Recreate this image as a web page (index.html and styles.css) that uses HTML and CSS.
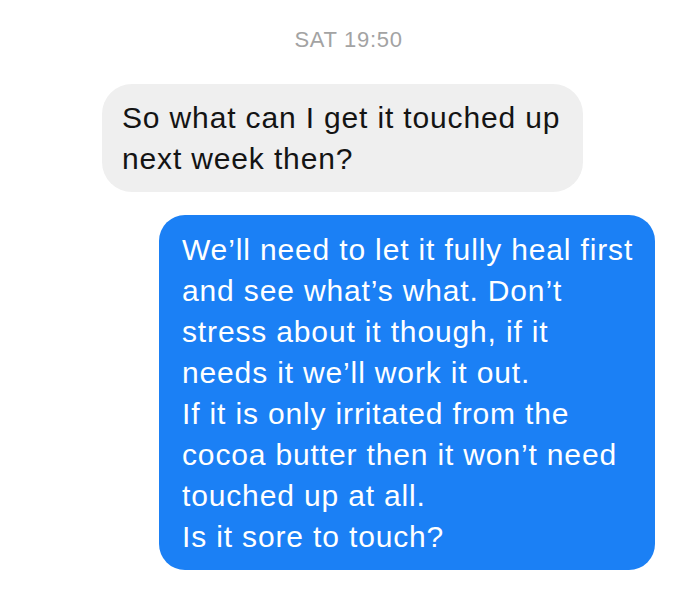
FILE: index.html
```html
<!DOCTYPE html>
<html lang="en">
  <head>
    <meta charset="UTF-8" />
    <meta name="viewport" content="width=device-width, initial-scale=1.0" />
    <title>Messages</title>
    <link rel="stylesheet" href="styles.css">
  </head>
  <body>
    <main class="thread">
      <div class="stamp">SAT 19:50</div>

      <div class="row row-in">
        <p class="bubble bubble-in">So what can I get it touched up next week then?</p>
      </div>

      <div class="row row-out">
        <p class="bubble bubble-out">
          We’ll need to let it fully heal first and see what’s what. Don’t stress about it though, if it needs it we’ll work it out.<br>
          If it is only irritated from the cocoa butter then it won’t need touched up at all.<br>
          Is it sore to touch?
        </p>
      </div>
    </main>
  </body>
</html>
```

FILE: styles.css
```css
:root {
  --bubble-in: #efefef;
  --bubble-out: #1b80f5;
  --stamp-clr: #a3a3a3;
}
body {
  margin: 0;
  background: #fff;
  font-family: "Liberation Sans", Arial, sans-serif;
  color: #141414;
}
.thread {
  padding: 27px 45px 0 102px;
  display: flex;
  flex-direction: column;
}
.stamp {
  text-align: center;
  font-size: 22px;
  line-height: 26px;
  letter-spacing: 0.7px;
  color: var(--stamp-clr);
  margin: 0 0 31px -102px;
  padding-left: 42px;
}
.row {
  display: flex;
}
.row-out {
  justify-content: flex-end;
  margin-top: 23px;
}
.bubble {
  margin: 0;
  font-size: 30px;
  line-height: 41px;
  letter-spacing: 0.85px;
}
.bubble-in {
  background: var(--bubble-in);
  width: 445px;
  padding: 13px 16px 13px 20px;
  border-radius: 30px;
}
.bubble-out {
  background: var(--bubble-out);
  color: #fff;
  width: 455px;
  padding: 14px 18px 13px 23px;
  border-radius: 26px;
}
```
